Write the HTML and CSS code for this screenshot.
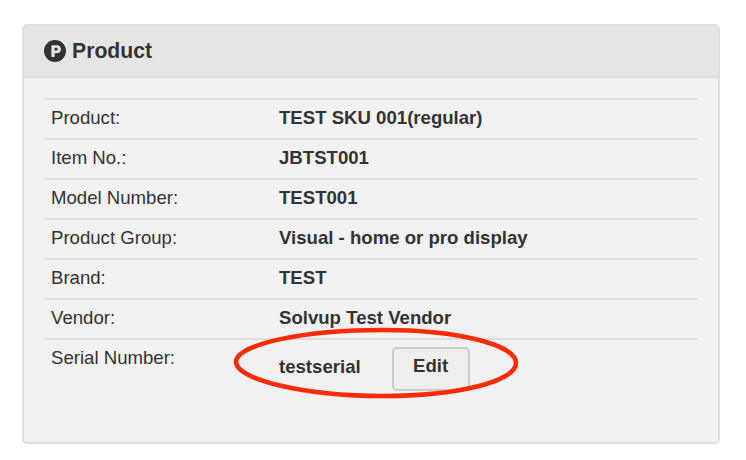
FILE: index.html
```html
<!DOCTYPE html>
<html lang="en">
<head>
<meta charset="utf-8">
<title>Product</title>
<link rel="stylesheet" href="styles.css">
</head>
<body>
<section class="card">
  <header class="card-head">
    <svg class="badge" viewBox="0 0 22 22" width="22" height="22" aria-hidden="true">
      <path fill-rule="evenodd" fill="#333" d="M11 0a11 11 0 1 1 0 22a11 11 0 0 1 0-22zM7.400 5.200V17h3.200V13.200h2c2.700 0 4.300-1.600 4.300-4c0-2.500-1.600-4-4.200-4zM10.600 7.800h1.500c1 0 1.600.5 1.600 1.400s-.6 1.400-1.600 1.400h-1.500z"/>
    </svg>
    <h2 class="title">Product</h2>
  </header>
  <div class="card-body">
    <div class="rows">
      <div class="row"><span class="label">Product:</span><strong class="value">TEST SKU 001(regular)</strong></div>
      <div class="row"><span class="label">Item No.:</span><strong class="value">JBTST001</strong></div>
      <div class="row"><span class="label">Model Number:</span><strong class="value">TEST001</strong></div>
      <div class="row"><span class="label">Product Group:</span><strong class="value">Visual - home or pro display</strong></div>
      <div class="row"><span class="label">Brand:</span><strong class="value">TEST</strong></div>
      <div class="row"><span class="label">Vendor:</span><strong class="value">Solvup Test Vendor</strong></div>
      <div class="row row-serial">
        <span class="label">Serial Number:</span>
        <div class="serial"><strong class="value">testserial</strong><button class="edit" type="button">Edit</button></div>
      </div>
    </div>
  </div>
  <svg class="ring" viewBox="0 0 286 72" width="286" height="72" aria-hidden="true">
    <path fill="none" stroke="#fb2a08" stroke-width="4.500" d="M3 34C6 17 70 3 150 3C226 3 283 18 283 36C283 54 226 69 150 69C70 69 1 52 3 34Z"/>
  </svg>
</section>
</body>
</html>
```
FILE: styles.css
```css
* { box-sizing: border-box; }
html, body { margin: 0; padding: 0; background: #fff; }
body {
  padding: 24px 26px 0 22px;
  font-family: "Liberation Sans", Arial, sans-serif;
  color: #333;
  height: 460px;
  overflow: hidden;
}
.card {
  position: relative;
  height: 420px;
  background: #f1f1f1;
  border: 2px solid #dedede;
  border-radius: 5px;
}
.card-head {
  display: flex;
  align-items: center;
  gap: 6px;
  height: 52px;
  padding: 0 0 0 20px;
  background: #e5e5e5;
  border-bottom: 2px solid #dedede;
}
.badge { flex: none; }
.title { margin: 0; font-size: 21.2px; font-weight: bold; line-height: 1; }
.card-body { padding: 20px 20px 0; }
.rows { border-top: 2px solid #dedede; }
.row {
  display: flex;
  align-items: center;
  height: 40px;
  padding: 0 0 2px 7px;
  border-bottom: 2px solid #dedede;
  font-size: 18.6px;
}
.row-serial { border-bottom: 0; align-items: flex-start; height: 60px; padding: 7px 0 0 7px; }
.label { width: 228px; flex: none; }
.value { font-weight: bold; }
.serial { display: flex; align-items: flex-start; gap: 31px; }
.row-serial .value { padding-top: 9px; }
.edit {
  width: 78px;
  height: 44px;
  padding: 0 0 6px;
  background: #eee;
  border: 2px solid #ccc;
  border-radius: 5px;
  font: bold 18.6px "Liberation Sans", Arial, sans-serif;
  color: #333;
}
.ring { position: absolute; left: 209px; top: 301px; }
```
